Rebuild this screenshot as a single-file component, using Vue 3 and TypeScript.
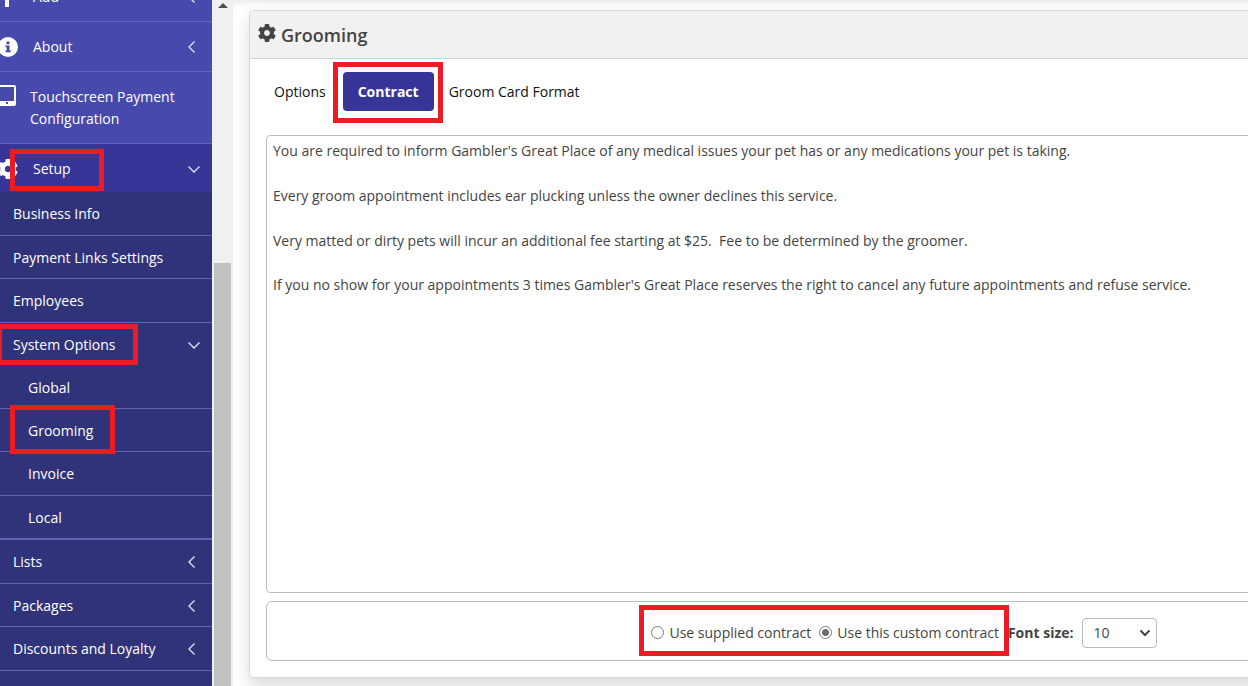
<script setup lang="ts">
import { ref } from 'vue'

type Chevron = 'left' | 'down' | ''
interface Item {
  label: string
  chevron: Chevron
  variant: string
}

const items: Item[] = [
  { label: 'Business Info', chevron: '', variant: '' },
  { label: 'Payment Links Settings', chevron: '', variant: 'tight' },
  { label: 'Employees', chevron: '', variant: '' },
  { label: 'System Options', chevron: 'down', variant: 'open marked mark-system' },
  { label: 'Global', chevron: '', variant: 'nested tight' },
  { label: 'Grooming', chevron: '', variant: 'nested tight marked mark-grooming' },
  { label: 'Invoice', chevron: '', variant: 'nested' },
  { label: 'Local', chevron: '', variant: 'nested last' },
  { label: 'Lists', chevron: 'left', variant: '' },
  { label: 'Packages', chevron: 'left', variant: 'tight' },
  { label: 'Discounts and Loyalty', chevron: 'left', variant: '' },
  { label: '', chevron: '', variant: '' },
]

const gear =
  'M487.4 315.7l-42.6-24.6c4.3-23.2 4.3-47 0-70.2l42.6-24.6c4.9-2.8 7.1-8.6 5.5-14-11.1-35.6-30-67.8-54.7-94.6-3.8-4.1-10-5.1-14.8-2.3L380.8 110c-17.9-15.4-38.5-27.3-60.8-35.1V25.8c0-5.6-3.9-10.5-9.4-11.7-36.7-8.2-74.3-7.8-109.2 0-5.5 1.2-9.4 6.1-9.4 11.7V75c-22.2 7.9-42.8 19.8-60.8 35.1L88.7 85.5c-4.9-2.8-11-1.9-14.8 2.3-24.7 26.7-43.6 58.9-54.7 94.6-1.7 5.4.6 11.2 5.5 14L67.3 221c-4.3 23.2-4.3 47 0 70.2l-42.6 24.6c-4.9 2.8-7.1 8.6-5.5 14 11.1 35.6 30 67.8 54.7 94.6 3.8 4.1 10 5.1 14.8 2.3l42.6-24.6c17.9 15.4 38.5 27.3 60.8 35.1v49.2c0 5.6 3.9 10.5 9.4 11.7 36.7 8.2 74.3 7.8 109.2 0 5.5-1.2 9.4-6.1 9.4-11.7v-49.2c22.2-7.9 42.8-19.8 60.8-35.1l42.6 24.6c4.9 2.8 11 1.9 14.8-2.3 24.7-26.7 43.6-58.9 54.7-94.6 1.5-5.5-.7-11.3-5.6-14.1zM256 336c-44.1 0-80-35.9-80-80s35.9-80 80-80 80 35.9 80 80-35.9 80-80 80z'

const contract = ref(
  [
    "You are required to inform Gambler's Great Place of any medical issues your pet has or any medications your pet is taking.",
    'Every groom appointment includes ear plucking unless the owner declines this service.',
    'Very matted or dirty pets will incur an additional fee starting at $25.  Fee to be determined by the groomer.',
    "If you no show for your appointments 3 times Gambler's Great Place reserves the right to cancel any future appointments and refuse service.",
  ].join('\n\n'),
)
const source = ref('custom')
const fontSize = ref('10')
</script>

<template>
  <div class="page">
    <aside class="sidebar">
      <nav class="menu" aria-label="Main">
        <a class="row top" href="#">
          <svg class="icon" viewBox="0 0 20 20"><path d="M7 1h4v7h7v5h-7v7H7v-7H0V8h7z" fill="#fff" /></svg>
          <span class="label">Add</span>
          <svg class="chev" viewBox="0 0 12 14"><path d="M7.5 1.5L2 7l5.5 5.5" /></svg>
        </a>
        <a class="row top" href="#">
          <svg class="icon" viewBox="0 0 20 20">
            <circle cx="10" cy="10" r="10" fill="#fff" />
            <path d="M8.500 4.500h3v2.700h-3zM7.500 8.500h4v5h1.200v1.700H7.500v-1.700h1.200v-3.300H7.500z" fill="#4849ad" />
          </svg>
          <span class="label">About</span>
          <svg class="chev" viewBox="0 0 12 14"><path d="M7.5 1.5L2 7l5.5 5.5" /></svg>
        </a>
        <a class="row top tall" href="#">
          <svg class="icon tablet" viewBox="0 0 20 22">
            <path
              fill="#fff"
              fill-rule="evenodd"
              d="M2 0h14a2 2 0 0 1 2 2v17a2 2 0 0 1-2 2H2a2 2 0 0 1-2-2V2a2 2 0 0 1 2-2zM2 2V16h14V2zM8 17v2h2v-2z"
            />
          </svg>
          <span class="label">Touchscreen Payment Configuration</span>
        </a>
        <a class="row top setup marked mark-setup" href="#">
          <svg class="icon" viewBox="10 8 492 496"><path :d="gear" fill="#fff" /></svg>
          <span class="label">Setup</span>
          <svg class="chev" viewBox="0 0 14 14"><path d="M2.500 4.500L8 10l5.500-5.500" /></svg>
        </a>
        <a v-for="(item, i) in items" :key="i" class="row" :class="item.variant" href="#">
          <span class="label">{{ item.label }}</span>
          <svg v-if="item.chevron === 'left'" class="chev" viewBox="0 0 12 14">
            <path d="M7.5 1.5L2 7l5.5 5.5" />
          </svg>
          <svg v-if="item.chevron === 'down'" class="chev" viewBox="0 0 14 14">
            <path d="M2.500 4.500L8 10l5.500-5.500" />
          </svg>
        </a>
      </nav>
    </aside>

    <div class="track">
      <svg class="arrow" viewBox="0 0 10 5"><path d="M5 0l5 5H0z" fill="#505050" /></svg>
      <div class="thumb"></div>
    </div>

    <main class="main">
      <section class="card">
        <header class="head">
          <svg class="cog" viewBox="10 8 492 496"><path :d="gear" fill="#444" /></svg>
          <h1>Grooming</h1>
        </header>
        <div class="tabs">
          <button type="button" class="tab">Options</button>
          <div class="marked mark-tab"><button type="button" class="tab active">Contract</button></div>
          <button type="button" class="tab">Groom Card Format</button>
        </div>
        <textarea v-model="contract" class="contract" aria-label="Contract text"></textarea>
        <div class="options">
          <div class="choices marked mark-choices">
            <label><input v-model="source" type="radio" name="source" value="supplied" />Use supplied contract</label>
            <label><input v-model="source" type="radio" name="source" value="custom" />Use this custom contract</label>
          </div>
          <label class="size-label" for="font-size">Font size:</label>
          <div class="select">
            <select id="font-size" v-model="fontSize">
              <option>8</option>
              <option>10</option>
              <option>12</option>
            </select>
            <svg viewBox="0 0 12 8"><path d="M1.5 1.5L6 6l4.5-4.5" /></svg>
          </div>
        </div>
      </section>
    </main>
  </div>
</template>

<style>
body {
  margin: 0;
  overflow: hidden;
}
</style>

<style scoped>
.page {
  display: flex;
  height: 100vh;
  overflow: hidden;
  font-family: 'Open Sans', 'Noto Sans', sans-serif;
  font-size: 14px;
  line-height: 22px;
  color: #444;
  background: #fff;
}
.page *,
.page *::after {
  box-sizing: border-box;
}
.sidebar {
  flex: 0 0 212px;
  overflow: hidden;
  background: #31337a;
}
.menu {
  display: flex;
  flex-direction: column;
  margin-top: -28px;
}
.row {
  position: relative;
  display: flex;
  flex: none;
  align-items: center;
  height: 44px;
  padding: 0 12px 0 13px;
  border-bottom: 1px solid #6361b8;
  background: #31337a;
  color: #fff;
  text-decoration: none;
}
.row .label {
  flex: 1;
}
.row.tight {
  height: 43px;
  padding-top: 1px;
}
.row.open {
  height: 43px;
  border-bottom: 0;
}
.row.nested {
  padding-left: 28px;
}
.row.last {
  padding-top: 2px;
  border-bottom-width: 2px;
}
.row.top {
  height: 50px;
  padding-left: 0;
  background: #4849ad;
}
.row.tall {
  height: 72px;
}
.row.tall .label {
  margin-left: 12px;
}
.row.top.setup {
  height: 48px;
  padding-top: 2px;
  border-bottom: 0;
  background: #383599;
}
.icon {
  flex: none;
  width: 20px;
  height: 20px;
  margin-left: -2px;
  margin-right: 15px;
}
.icon.tablet {
  align-self: flex-start;
  height: 22px;
  margin: 13px 0 0 -2px;
}
.chev {
  flex: none;
  width: 14px;
  height: 14px;
  overflow: visible;
  fill: none;
  stroke: #e4e4f4;
  stroke-width: 1.3;
}
.marked {
  position: relative;
}
.marked::after {
  content: '';
  position: absolute;
  border: 5px solid #ed1c24;
  pointer-events: none;
  z-index: 1;
}
.mark-setup::after {
  left: 10px;
  top: 5px;
  width: 94px;
  height: 42px;
}
.mark-system::after {
  left: -3px;
  top: 1px;
  width: 141px;
  height: 41px;
}
.mark-grooming::after {
  left: 10px;
  top: -4px;
  width: 105px;
  height: 49px;
}
.mark-tab::after {
  inset: -10px -9px -12px -10px;
}
.mark-choices::after {
  inset: -17px -10px -12px -12px;
}
.track {
  flex: 0 0 21px;
  display: flex;
  flex-direction: column;
  align-items: center;
  background: #f0f0f0;
}
.arrow {
  width: 10px;
  height: 5px;
  margin: 3px 0 255px;
}
.thumb {
  flex: 1;
  width: 17px;
  background: #c1c1c1;
}
.main {
  flex: 1;
  min-width: 0;
  overflow: hidden;
  padding: 10px 0 0 16px;
  box-shadow: inset 0 8px 10px -8px rgba(0, 0, 0, 0.15);
}
.card {
  margin-right: -311px;
  padding-bottom: 16px;
  border: 1px solid #d9d9d9;
  border-radius: 4px;
  background: #fff;
  box-shadow: 0 8px 16px rgba(0, 0, 0, 0.15);
}
.head {
  display: flex;
  align-items: center;
  gap: 5px;
  height: 48px;
  padding: 0 8px;
  border-bottom: 1px solid #d3d3d3;
  border-radius: 3px 3px 0 0;
  background: #f1f1f1;
}
.cog {
  width: 18px;
  height: 18px;
  margin-bottom: 4px;
}
h1 {
  margin: 0;
  font-size: 18px;
  font-weight: 600;
  line-height: 24px;
}
.tabs {
  display: flex;
  align-items: center;
  padding: 13px 24px 0;
}
button {
  font: inherit;
  border: 0;
  cursor: pointer;
}
.tab {
  height: 39px;
  padding: 0;
  background: none;
  color: #111;
}
.mark-tab {
  margin: 0 15px 0 17px;
}
.tab.active {
  display: block;
  padding: 0 15px;
  border-radius: 4px;
  background: #383599;
  color: #fff;
  font-weight: 700;
}
.contract {
  display: block;
  width: auto;
  min-width: calc(100% - 32px);
  height: 458px;
  margin: 24px 16px 8px;
  padding: 4px 6px;
  border: 1px solid #bbb;
  border-radius: 4px;
  background: #fff;
  color: #444;
  font: inherit;
  line-height: 1.6;
  resize: none;
  outline: 0;
}
.options {
  display: flex;
  align-items: center;
  justify-content: center;
  height: 60px;
  margin: 0 16px;
  padding-top: 3px;
  border: 1px solid #bbb;
  border-radius: 6px;
}
.choices {
  display: flex;
  gap: 8px;
  margin-right: 9px;
}
.choices label {
  display: flex;
  align-items: center;
  gap: 5px;
}
.choices input {
  appearance: none;
  width: 13px;
  height: 13px;
  margin: 0;
  border: 1px solid #767676;
  border-radius: 50%;
  background: #fff;
}
.choices input:checked {
  background: radial-gradient(circle, #6b6b6b 3px, #fff 4px);
}
.size-label {
  margin-right: 8px;
  font-weight: 700;
}
.select {
  position: relative;
}
select {
  appearance: none;
  display: block;
  width: 75px;
  height: 30px;
  padding: 0 11px;
  border: 1px solid #bbb;
  border-radius: 4px;
  background: #fff;
  color: #444;
  font: inherit;
}
.select svg {
  position: absolute;
  right: 6px;
  top: 11px;
  width: 12px;
  height: 8px;
  fill: none;
  stroke: #444;
  stroke-width: 2;
  pointer-events: none;
}
</style>
